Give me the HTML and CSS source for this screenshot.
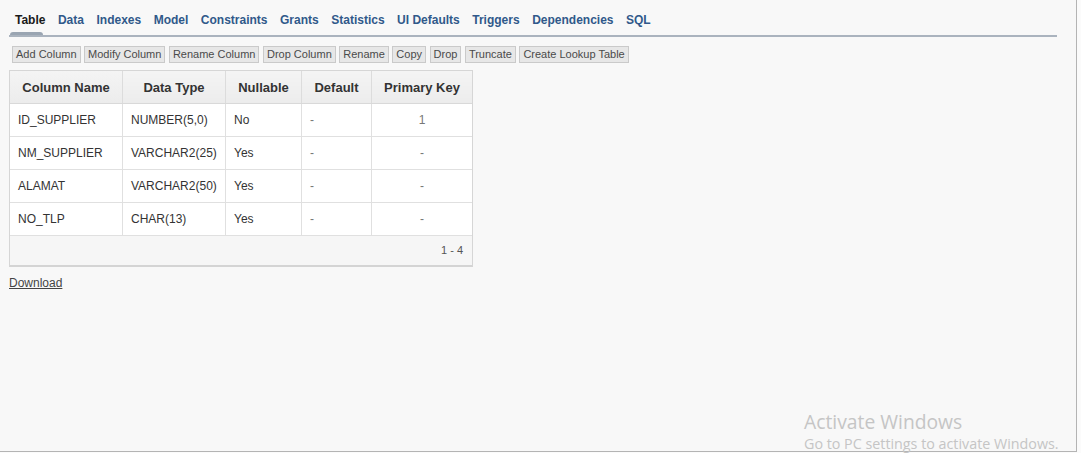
FILE: index.html
```html
<!DOCTYPE html>
<html>
<head>
<meta charset="utf-8">
<link rel="stylesheet" href="styles.css">
</head>
<body>
<div class="frame">
  <div class="tabs">
    <span class="tab active">Table</span>
    <span class="tab">Data</span>
    <span class="tab">Indexes</span>
    <span class="tab">Model</span>
    <span class="tab">Constraints</span>
    <span class="tab">Grants</span>
    <span class="tab">Statistics</span>
    <span class="tab">UI Defaults</span>
    <span class="tab">Triggers</span>
    <span class="tab">Dependencies</span>
    <span class="tab">SQL</span>
  </div>
  <div class="buttons">
    <span class="btn">Add Column</span>
    <span class="btn">Modify Column</span>
    <span class="btn">Rename Column</span>
    <span class="btn">Drop Column</span>
    <span class="btn">Rename</span>
    <span class="btn">Copy</span>
    <span class="btn">Drop</span>
    <span class="btn">Truncate</span>
    <span class="btn">Create Lookup Table</span>
  </div>
  <div class="report">
    <table class="grid">
      <thead>
        <tr>
          <th class="c1">Column Name</th>
          <th class="c2">Data Type</th>
          <th class="c3">Nullable</th>
          <th class="c4">Default</th>
          <th class="c5">Primary Key</th>
        </tr>
      </thead>
      <tbody>
        <tr><td>ID_SUPPLIER</td><td>NUMBER(5,0)</td><td>No</td><td>-</td><td class="center">1</td></tr>
        <tr><td>NM_SUPPLIER</td><td>VARCHAR2(25)</td><td>Yes</td><td>-</td><td class="center">-</td></tr>
        <tr><td>ALAMAT</td><td>VARCHAR2(50)</td><td>Yes</td><td>-</td><td class="center">-</td></tr>
        <tr><td>NO_TLP</td><td>CHAR(13)</td><td>Yes</td><td>-</td><td class="center">-</td></tr>
      </tbody>
    </table>
    <div class="pager">1 - 4</div>
  </div>
  <a class="download" href="#">Download</a>
  <div class="watermark">
    <div class="wm1">Activate Windows</div>
    <div class="wm2">Go to PC settings to activate Windows.</div>
  </div>
</div>
</body>
</html>
```

FILE: styles.css
```css
html, body {
  margin: 0;
  padding: 0;
  background: #fbfbfb;
}
body {
  width: 1081px;
  height: 453px;
  overflow: hidden;
  font-family: "Liberation Sans", Arial, sans-serif;
}
.frame {
  position: relative;
  width: 1077px;
  height: 452px;
  background: #f8f8f8;
  border-right: 1px solid #b4b4b4;
  border-bottom: 1px solid #b4b4b4;
  box-sizing: border-box;
  padding: 0 0 0 9px;
}
.tabs {
  display: flex;
  gap: 12.5px;
  width: 1048px;
  height: 37px;
  box-sizing: border-box;
  padding: 13px 0 0 6px;
  border-bottom: 2px solid #aab3be;
}
.tab {
  font-size: 12px;
  font-weight: bold;
  color: #30598a;
  line-height: 14px;
}
.tab.active {
  color: #1a1a1a;
  position: relative;
}
.tab.active::after {
  content: "";
  position: absolute;
  left: -5px;
  bottom: 0;
  width: 33px;
  height: 3px;
  background: #9aa5b2;
  border-radius: 3px 3px 0 0;
}
.buttons {
  display: flex;
  gap: 3.5px;
  margin: 9px 0 0 3px;
}
.btn {
  font-size: 11px;
  line-height: 13px;
  color: #4a4a4a;
  background: #e7e7e7;
  border: 1px solid #cacaca;
  padding: 1px 3px 1px 3px;
}
.report {
  margin-top: 7px;
  width: 464px;
  border: 1px solid #d6d6d6;
  border-bottom: 2px solid #d4d4d4;
  background: #f6f6f6;
  box-sizing: border-box;
}
.grid {
  border-collapse: collapse;
  width: 462px;
  table-layout: fixed;
}
.grid th {
  height: 32px;
  font-size: 13px;
  font-weight: bold;
  color: #333;
  text-align: center;
  background: linear-gradient(#f4f4f4, #ececec);
  border-right: 1px solid #dcdcdc;
  border-bottom: 1px solid #d9d9d9;
  padding: 0;
}
.grid th:last-child, .grid td:last-child {
  border-right: none;
}
.c1 { width: 112px; }
.c2 { width: 102px; }
.c3 { width: 75px; }
.c4 { width: 69px; }
.grid td {
  height: 32px;
  background: #fff;
  font-size: 12px;
  color: #333;
  padding: 0 0 0 8px;
  border-right: 1px solid #e0e0e0;
  border-bottom: 1px solid #e0e0e0;
}
.grid td.center {
  text-align: center;
  padding: 0;
}
.grid td:nth-child(4), .grid td.center {
  color: #777;
}
.pager {
  height: 29px;
  line-height: 29px;
  text-align: right;
  font-size: 11px;
  color: #555;
  padding-right: 9px;
}
.download {
  display: inline-block;
  margin-top: 9px;
  font-size: 12px;
  color: #444;
  text-decoration: underline;
}
.watermark {
  position: absolute;
  left: 804px;
  top: 410px;
  font-family: "Open Sans", "DejaVu Sans", sans-serif;
  color: #c5c5c5;
}
.wm1 {
  font-size: 19.3px;
  line-height: 24px;
}
.wm2 {
  font-size: 14.3px;
  line-height: 20px;
}
```
